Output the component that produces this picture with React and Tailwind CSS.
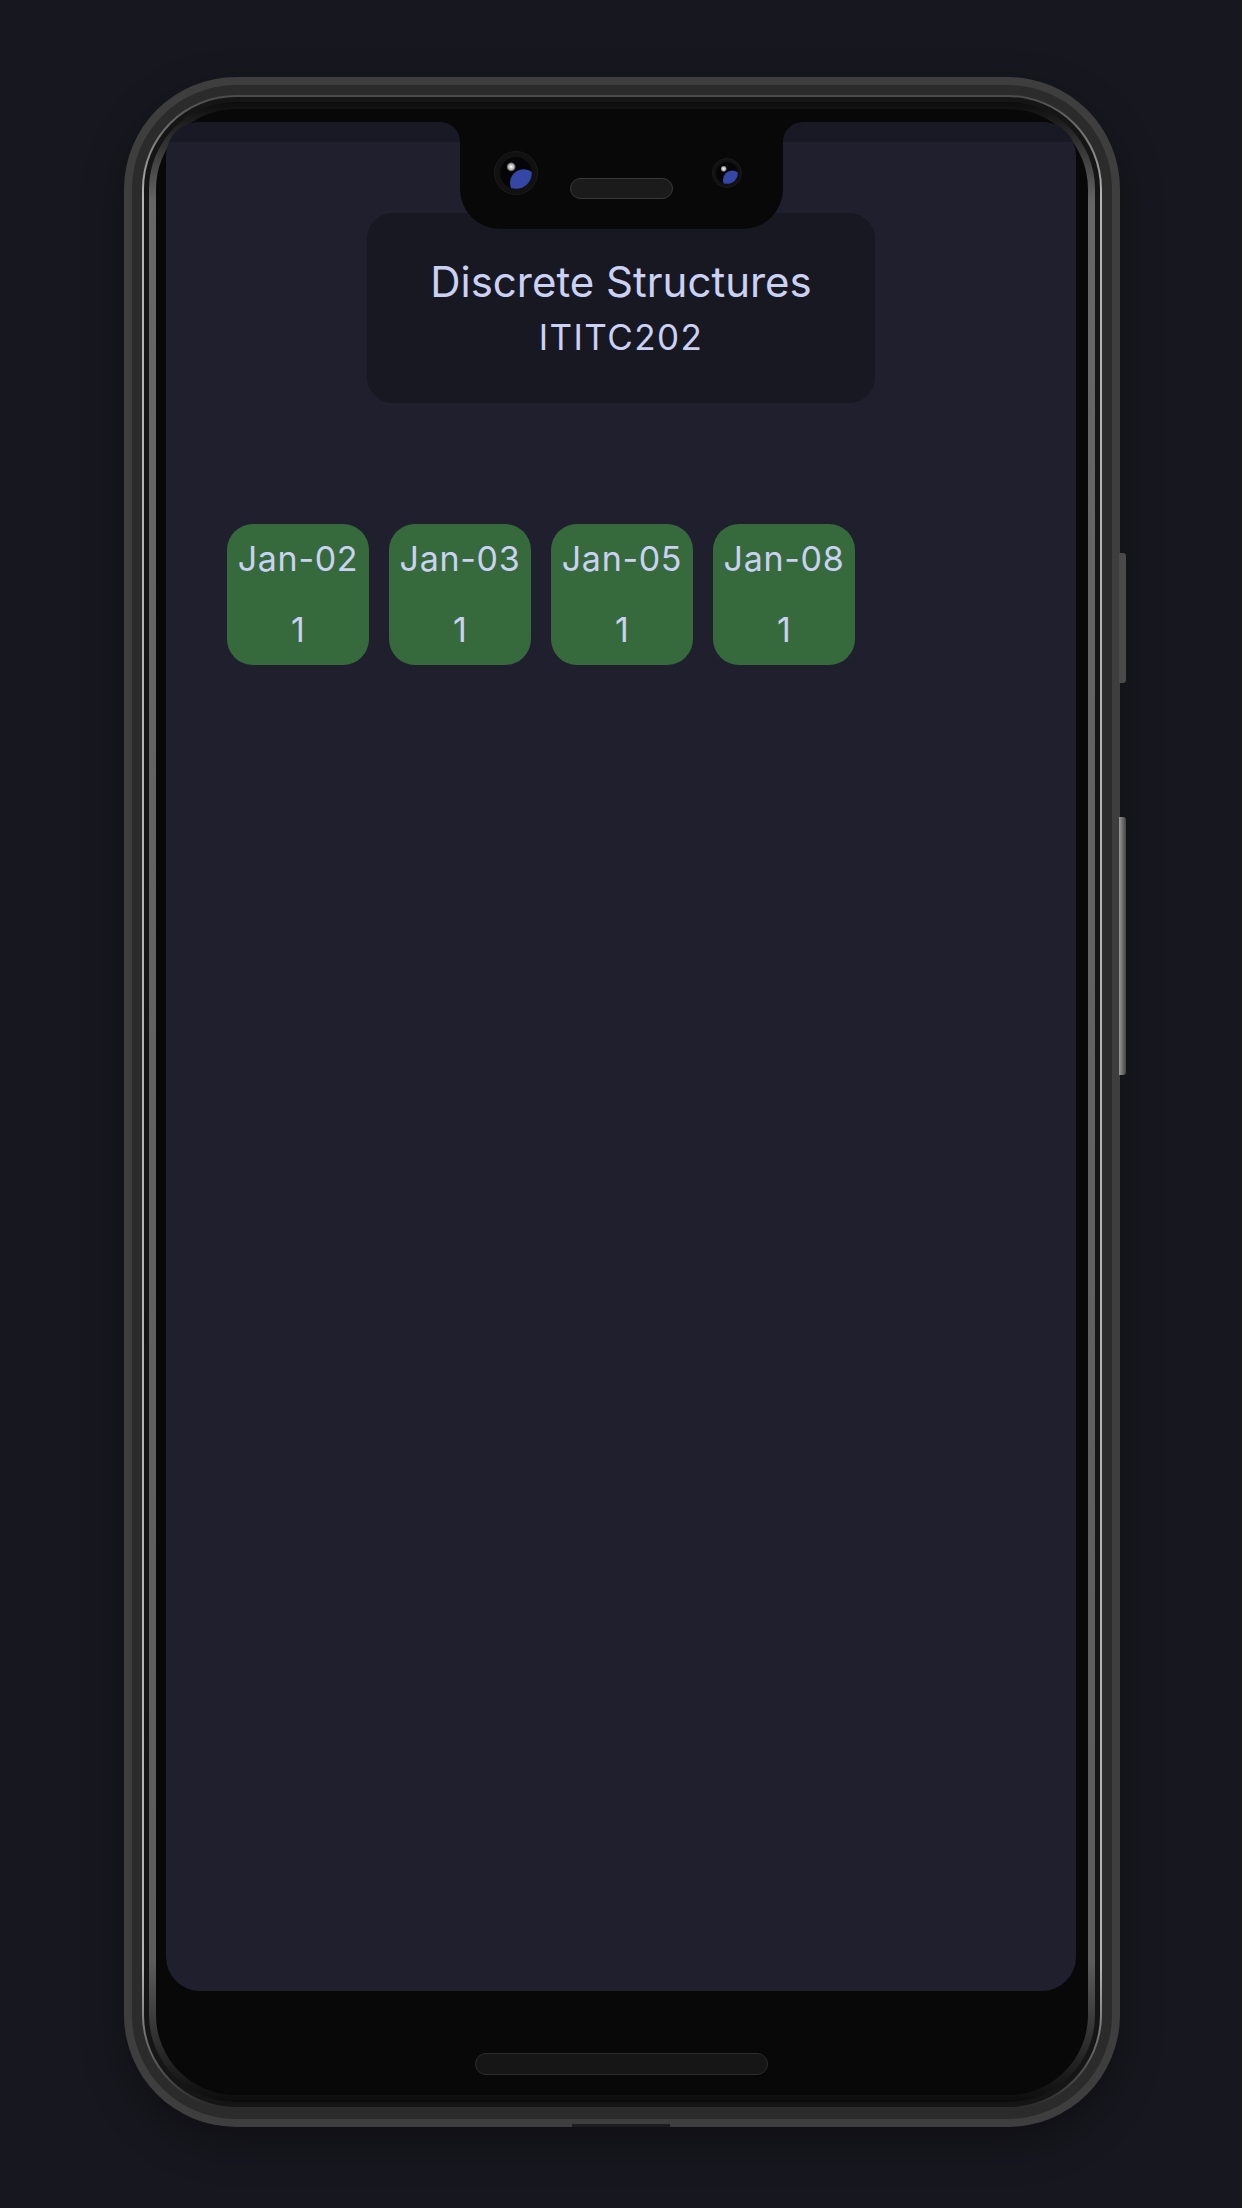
import React from 'react';

const days = [
  { date: 'Jan-02', count: 1 },
  { date: 'Jan-03', count: 1 },
  { date: 'Jan-05', count: 1 },
  { date: 'Jan-08', count: 1 },
];

function Camera({ size, id }) {
  const r = size / 2;
  return (
    <svg width={size} height={size} viewBox={`0 0 ${size} ${size}`}>
      <defs>
        <clipPath id={`lens-${id}`}>
          <circle cx={r} cy={r} r={r * 0.72} />
        </clipPath>
        <radialGradient id={`glow-${id}`} cx="0.5" cy="0.5" r="0.5">
          <stop offset="0%" stopColor="#ffffff" />
          <stop offset="60%" stopColor="#d8d8d8" stopOpacity="0.8" />
          <stop offset="100%" stopColor="#ffffff" stopOpacity="0" />
        </radialGradient>
      </defs>
      <circle cx={r} cy={r} r={r - 0.5} fill="#111111" stroke="#1c1c1c" />
      <circle cx={r} cy={r} r={r * 0.72} fill="#050508" />
      <g clipPath={`url(#lens-${id})`}>
        <circle cx={r * 1.35} cy={r * 1.45} r={r * 0.62} fill="#3546a6" />
      </g>
      <circle cx={r * 0.78} cy={r * 0.72} r={r * 0.22} fill={`url(#glow-${id})`} />
    </svg>
  );
}

function DayCard({ day }) {
  return (
    <div className="w-[142px] h-[141px] rounded-[26px] bg-[#366a3c] flex flex-col items-center pt-[15px]">
      <span className="text-[34px] leading-[40px] tracking-[0.02em]">{day.date}</span>
      <span className="mt-[31px] text-[34px] leading-[40px]">{day.count}</span>
    </div>
  );
}

function Screen() {
  return (
    <div className="h-[1869px] rounded-[34px] bg-[#1f1f2e] overflow-hidden flex flex-col text-[#cbd1f2]">
      <div className="h-[20px] bg-[#191926]" />

      {/* Course header */}
      <div className="mx-auto mt-[71px] w-[508px] h-[190px] rounded-[26px] bg-[#181823] pt-[44px] flex flex-col items-center">
        <span className="text-[42px] leading-[50px]">Discrete Structures</span>
        <span className="mt-[9px] text-[35px] leading-[42px] tracking-[0.04em]">ITITC202</span>
      </div>

      {/* Attendance days */}
      <div className="mt-[121px] pl-[61px] flex gap-[20px]">
        {days.map((d) => (
          <DayCard key={d.date} day={d} />
        ))}
      </div>
    </div>
  );
}

function Notch() {
  return (
    <>
      <div className="absolute left-[284px] top-[13px] w-[20px] h-[20px] bg-[#080808]">
        <div className="w-full h-full rounded-tr-[20px] bg-[#191926]" />
      </div>
      <div className="absolute left-[627px] top-[13px] w-[20px] h-[20px] bg-[#080808]">
        <div className="w-full h-full rounded-tl-[20px] bg-[#191926]" />
      </div>
      <div className="absolute left-[304px] top-0 w-[323px] h-[120px] rounded-b-[40px] bg-[#080808] flex items-start pl-[34px]">
        <div className="mt-[42px]">
          <Camera size={44} id="main" />
        </div>
        <div className="ml-[32px] mt-[69px] w-[103px] h-[21px] rounded-full bg-[#1b1b1b] border border-[#3a3a3a]" />
        <div className="ml-[39px] mt-[49px]">
          <Camera size={30} id="front" />
        </div>
      </div>
    </>
  );
}

export default function App() {
  return (
    <div
      className="min-h-[2208px] w-full bg-[#17171f] pt-[77px] pl-[124px]"
      style={{ fontFamily: 'Inter, "Noto Sans", sans-serif' }}
    >
      <div className="relative w-[996px] h-[2050px]">
        {/* Side buttons */}
        <div className="absolute left-[995px] top-[476px] w-[7px] h-[130px] rounded-r-[3px] bg-[#4a4a4a]" />
        <div className="absolute left-[995px] top-[740px] w-[7px] h-[258px] rounded-r-[3px] bg-gradient-to-r from-[#9a9a9a] to-[#444]" />

        <div className="h-full rounded-[112px] bg-[#3e3e3e] p-[8px] shadow-[0_16px_40px_rgba(0,0,0,0.35)]">
          <div className="h-full rounded-[104px] bg-[#2b2b2b] p-[10px]">
            <div className="h-full rounded-[94px] bg-[linear-gradient(to_bottom,#4a4a4a_0%,#b4b4b4_5%,#b4b4b4_93%,#2a2a2a_100%)] p-[2px]">
              <div className="h-full rounded-[92px] bg-[#151515] p-[5px]">
                <div className="h-full rounded-[87px] bg-[linear-gradient(to_bottom,#0c0c0c_0%,#666666_5%,#5c5c5c_93%,#0c0c0c_100%)] p-[7px]">
                  <div className="relative h-full rounded-[80px] bg-[#080808] pl-[10px] pr-[12px] pt-[13px] flex flex-col">
                    <Screen />
                    <div className="mx-auto mt-[62px] w-[293px] h-[22px] rounded-full bg-[#161616] border border-[#2c2c2c]" />
                    <Notch />
                  </div>
                </div>
              </div>
            </div>
          </div>
        </div>

        {/* Bottom recess */}
        <div className="absolute left-[448px] bottom-0 w-[98px] h-[3px] bg-[#1d1d1d]" />
      </div>
    </div>
  );
}
